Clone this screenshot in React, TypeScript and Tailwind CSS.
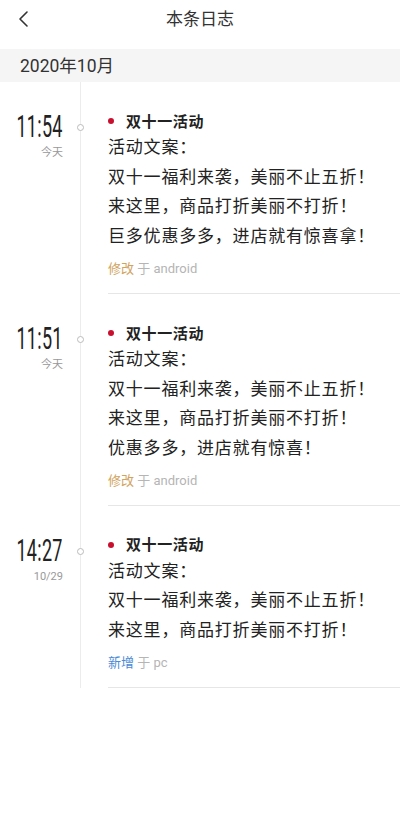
import React from 'react';

type LogEntry = {
  time: string;
  day: string;
  title: string;
  lines: string[];
  action: string;
  actionColor: 'gold' | 'blue';
  source: string;
};

const ENTRIES: LogEntry[] = [
  {
    time: '11:54',
    day: '今天',
    title: '双十一活动',
    lines: ['活动文案：', '双十一福利来袭，美丽不止五折！', '来这里，商品打折美丽不打折！', '巨多优惠多多，进店就有惊喜拿！'],
    action: '修改',
    actionColor: 'gold',
    source: 'android',
  },
  {
    time: '11:51',
    day: '今天',
    title: '双十一活动',
    lines: ['活动文案：', '双十一福利来袭，美丽不止五折！', '来这里，商品打折美丽不打折！', '优惠多多，进店就有惊喜！'],
    action: '修改',
    actionColor: 'gold',
    source: 'android',
  },
  {
    time: '14:27',
    day: '10/29',
    title: '双十一活动',
    lines: ['活动文案：', '双十一福利来袭，美丽不止五折！', '来这里，商品打折美丽不打折！'],
    action: '新增',
    actionColor: 'blue',
    source: 'pc',
  },
];

const FONT = "font-['Roboto','Noto_Sans_CJK_SC',sans-serif]";

const App: React.FC = () => {
  return (
    <div className={`w-[400px] min-h-[821px] bg-white text-[#222] ${FONT}`}>
      {/* Header */}
      <header className="relative h-[49px] flex justify-center pt-[6px]">
        <button className="absolute left-[14px] top-[8px] w-[18px] h-[22px] flex items-center justify-center">
          <svg width="12" height="18" viewBox="0 0 12 18" fill="none" stroke="#333" strokeWidth="1.6" strokeLinecap="round" strokeLinejoin="round">
            <polyline points="10,2 3,9 10,16" />
          </svg>
        </button>
        <h1 className="text-[17px] leading-[26px] text-[#333]">本条日志</h1>
      </header>

      {/* Month band */}
      <div className="h-[33px] bg-[#f5f5f5] flex items-center pl-[20px] pt-[2px]">
        <span className="text-[17.5px] text-[#333]">2020年10月</span>
      </div>

      {/* Timeline */}
      <div>
        {ENTRIES.map((e, i) => (
          <div key={i} className="flex">
            <div className="w-[80px] shrink-0 flex flex-col items-end pr-[17px] pt-[30px]">
              <span className="inline-block origin-right scale-x-[0.58] text-[31px] leading-[30px] text-[#222] font-['Roboto',sans-serif] tracking-[0.5px]">
                {e.time}
              </span>
              <span className="text-[11px] leading-[14px] text-[#999] mt-[4px]">{e.day}</span>
            </div>
            <div className="relative flex-1 border-l border-[#ececec]">
              <span className="absolute left-[-4px] top-[42px] w-[7px] h-[7px] rounded-full border border-[#bbb] bg-white" />
              <div className="ml-[27px] pt-[30px] pb-[15px] border-b border-[#e6e6e6]">
                <div className="flex items-center h-[20px]">
                  <span className="w-[6px] h-[6px] rounded-full bg-[#c8102e] mr-[12px] -mt-[2px]" />
                  <span className="text-[15px] font-bold text-[#222] tracking-[0.6px]">{e.title}</span>
                </div>
                <div className="text-[17px] leading-[29.7px] text-[#222] mt-[1px] tracking-[0.8px]">
                  {e.lines.map((l, j) => (
                    <div key={j}>{l}</div>
                  ))}
                </div>
                <div className="mt-[8px] text-[13px] leading-[18px]">
                  <span className={e.actionColor === 'gold' ? 'text-[#d1a35c]' : 'text-[#4a8ad6]'}>{e.action}</span>
                  <span className="text-[#b5b5b5]"> 于 {e.source}</span>
                </div>
              </div>
            </div>
          </div>
        ))}
      </div>
    </div>
  );
};

export default App;
